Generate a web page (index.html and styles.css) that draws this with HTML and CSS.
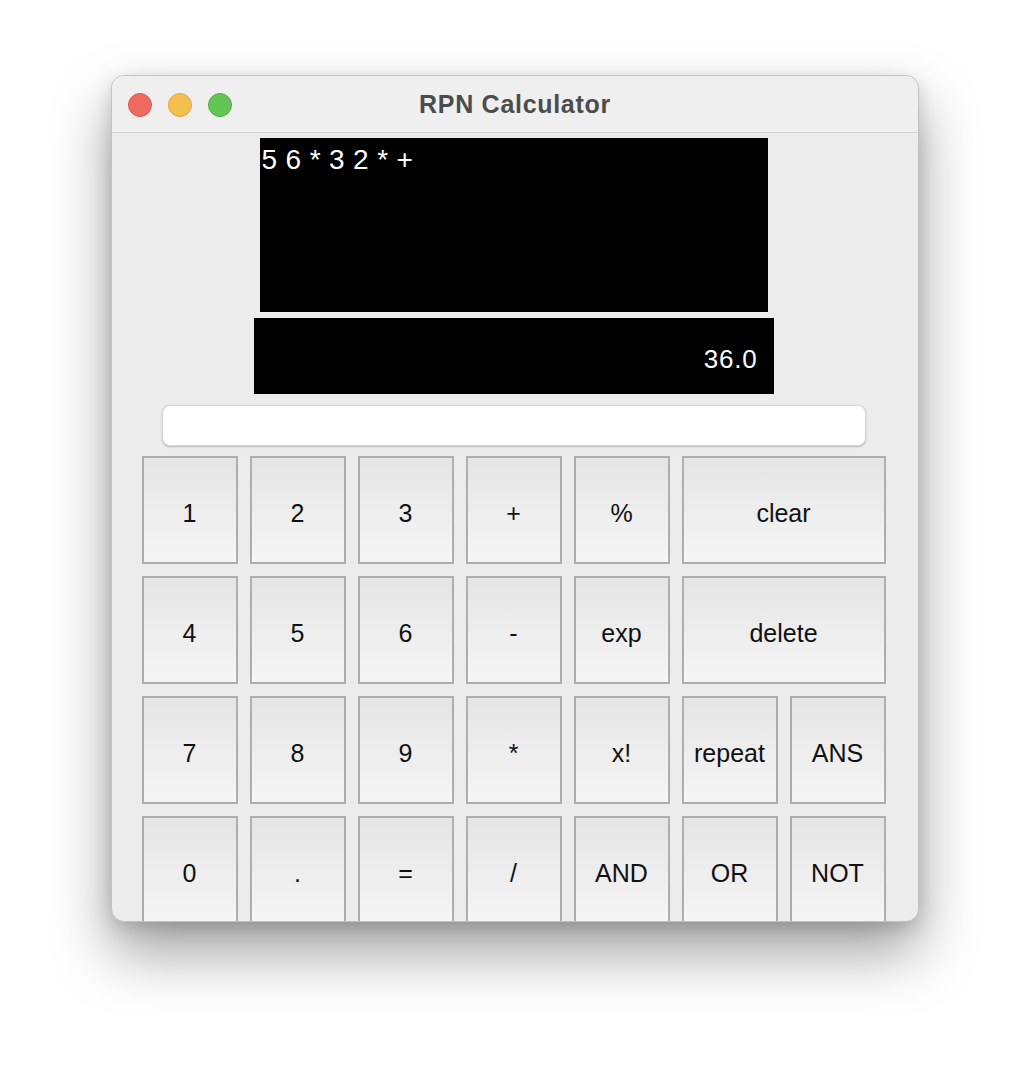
FILE: index.html
```html
<!DOCTYPE html>
<html>
<head>
<meta charset="utf-8">
<link rel="stylesheet" href="styles.css">
</head>
<body>
<div class="window">
  <div class="titlebar">
    <div class="lights">
      <span class="light red"></span>
      <span class="light yellow"></span>
      <span class="light green"></span>
    </div>
    <div class="title">RPN Calculator</div>
  </div>
  <div class="content">
    <div class="display-expr">56*32*+</div>
    <div class="display-result">36.0</div>
    <div class="input"></div>
    <div class="keys">
      <div class="key">1</div>
      <div class="key">2</div>
      <div class="key">3</div>
      <div class="key">+</div>
      <div class="key">%</div>
      <div class="key wide">clear</div>
      <div class="key">4</div>
      <div class="key">5</div>
      <div class="key">6</div>
      <div class="key">-</div>
      <div class="key">exp</div>
      <div class="key wide">delete</div>
      <div class="key">7</div>
      <div class="key">8</div>
      <div class="key">9</div>
      <div class="key">*</div>
      <div class="key">x!</div>
      <div class="key">repeat</div>
      <div class="key">ANS</div>
      <div class="key">0</div>
      <div class="key">.</div>
      <div class="key">=</div>
      <div class="key">/</div>
      <div class="key">AND</div>
      <div class="key">OR</div>
      <div class="key">NOT</div>
    </div>
  </div>
</div>
</body>
</html>
```

FILE: styles.css
```css
html, body {
  margin: 0;
  padding: 0;
  background: #ffffff;
}
html {
  height: 100%;
}
body {
  min-height: 1070px;
  box-sizing: border-box;
  padding-top: 75px;
  padding-left: 111px;
  font-family: "Liberation Sans", Arial, sans-serif;
}
.window {
  width: 808px;
  height: 847px;
  box-sizing: border-box;
  border: 1px solid #c2c2c2;
  border-radius: 13px;
  background: #ececec;
  overflow: hidden;
  box-shadow: 0 30px 60px rgba(0, 0, 0, 0.38), 0 6px 18px rgba(0, 0, 0, 0.14);
  display: flex;
  flex-direction: column;
}
.titlebar {
  height: 56px;
  flex: none;
  background: #efeff0;
  border-bottom: 1px solid #d2d2d2;
  display: flex;
  align-items: center;
  position: relative;
}
.lights {
  display: flex;
  gap: 16px;
  padding-left: 16px;
  padding-top: 1px;
}
.light {
  width: 24px;
  height: 24px;
  border-radius: 50%;
  box-sizing: border-box;
}
.red { background: #ee6a5f; border: 1px solid #d85a50; }
.yellow { background: #f5bf4f; border: 1px solid #dba63f; }
.green { background: #62c554; border: 1px solid #52ad45; }
.title {
  position: absolute;
  left: 0;
  right: 0;
  top: 0;
  height: 56px;
  line-height: 56px;
  text-align: center;
  font-weight: bold;
  font-size: 25px;
  letter-spacing: 0.7px;
  color: #4c4c4c;
}
.content {
  display: flex;
  flex-direction: column;
  align-items: center;
  padding-right: 3px;
}
.display-expr {
  margin-top: 5px;
  width: 508px;
  height: 174px;
  background: #000;
  color: #fff;
  font-size: 28px;
  letter-spacing: 8.5px;
  line-height: 44px;
  padding-left: 2px;
  box-sizing: border-box;
}
.display-result {
  margin-top: 6px;
  width: 520px;
  height: 76px;
  background: #000;
  color: #fff;
  font-size: 26px;
  letter-spacing: 0.8px;
  display: flex;
  align-items: center;
  justify-content: flex-end;
  padding-right: 16px;
  padding-top: 6px;
  box-sizing: border-box;
}
.input {
  margin-top: 11px;
  width: 704px;
  height: 41px;
  background: #fff;
  border-radius: 8px;
  box-sizing: border-box;
  border: 1px solid #d6d6d6;
  box-shadow: 0 1px 2px rgba(0, 0, 0, 0.22);
}
.keys {
  margin-top: 10px;
  display: grid;
  grid-template-columns: repeat(7, 96px);
  grid-auto-rows: 108px;
  gap: 12px;
}
.key {
  box-sizing: border-box;
  border: 2px solid #adadad;
  background: linear-gradient(#e5e5e5, #f5f5f5);
  display: flex;
  align-items: center;
  justify-content: center;
  font-size: 25px;
  color: #111;
  padding-top: 7px;
}
.wide {
  grid-column: span 2;
}
```
